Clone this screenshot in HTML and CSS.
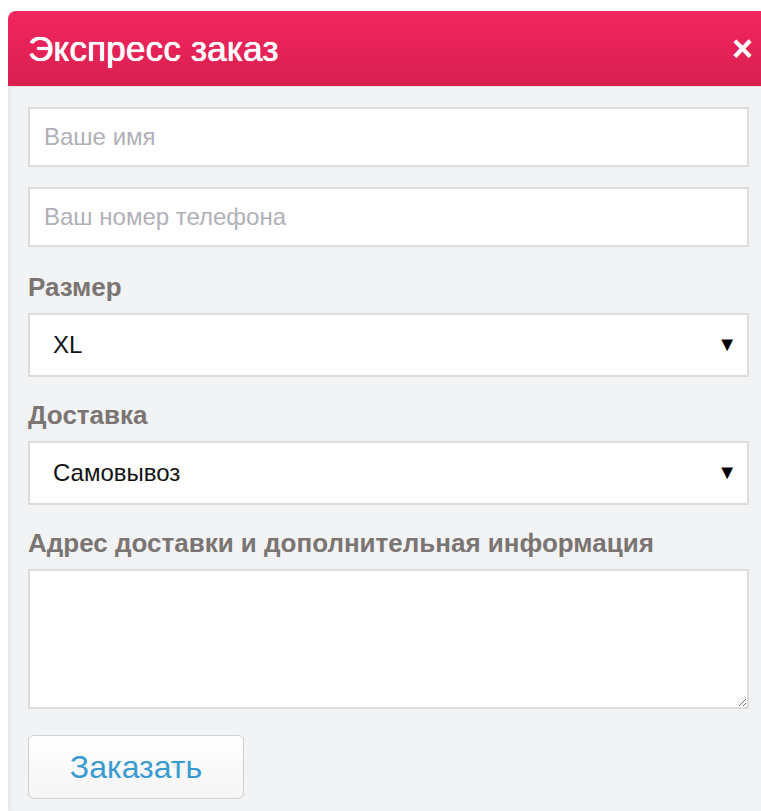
FILE: index.html
```html
<!DOCTYPE html>
<html lang="ru">
<head>
<meta charset="utf-8">
<title>Экспресс заказ</title>
<link rel="stylesheet" href="styles.css">
</head>
<body>
<div class="modal">
  <div class="modal-head">
    <h2 class="modal-title">Экспресс заказ</h2>
    <span class="modal-close">×</span>
  </div>
  <form class="modal-body">
    <input class="field" type="text" placeholder="Ваше имя">
    <input class="field" type="text" placeholder="Ваш номер телефона">
    <label class="label">Размер</label>
    <div class="select">
      <span class="select-value">XL</span>
      <span class="select-arrow">▼</span>
    </div>
    <label class="label">Доставка</label>
    <div class="select">
      <span class="select-value">Самовывоз</span>
      <span class="select-arrow">▼</span>
    </div>
    <label class="label">Адрес доставки и дополнительная информация</label>
    <textarea class="area"></textarea>
    <div class="actions">
      <button class="btn" type="button">Заказать</button>
    </div>
  </form>
</div>
</body>
</html>
```

FILE: styles.css
```css
html, body {
  margin: 0;
  padding: 0;
  background: #ffffff;
  font-family: "Liberation Sans", Arial, sans-serif;
}

body {
  padding: 11px 0 0 8px;
  overflow: hidden;
}

.modal {
  width: 780px;
  border-radius: 8px 8px 0 0;
  background: #f2f3f5;
  box-shadow: inset 6px 0 6px -4px rgba(0, 0, 0, 0.06);
  overflow: hidden;
}

.modal-head {
  height: 75px;
  background: linear-gradient(#f2265f, #d91f50);
  display: flex;
  align-items: center;
  padding: 0 20px 0 20px;
  border-bottom: 1px solid #e7e3e5;
}

.modal-title {
  margin: 0;
  color: #ffffff;
  font-size: 35px;
  font-weight: normal;
  letter-spacing: 0.2px;
  flex: 1;
  text-shadow: 0 0 1px #ffffff, 0.4px 0 0 #ffffff;
}

.modal-close {
  color: #ffffff;
  font-size: 36px;
  font-weight: bold;
  line-height: 1;
  margin-right: 15px;
}

.modal-body {
  padding: 20px 0 13px 20px;
  width: 721px;
  display: flex;
  flex-direction: column;
}

.field {
  box-sizing: border-box;
  height: 60px;
  margin: 0 0 20px 0;
  border: 2px solid #dcdcdc;
  background: #ffffff;
  padding: 0 14px;
  font-family: "Liberation Sans", Arial, sans-serif;
  font-size: 24px;
  outline: none;
}

.field::placeholder {
  color: #b0b0b8;
}

.label {
  font-size: 26px;
  font-weight: bold;
  color: #7a7572;
  margin: 5px 0 11px 0;
  line-height: 30px;
}

.select {
  box-sizing: border-box;
  height: 64px;
  border: 2px solid #dcdcdc;
  background: #ffffff;
  display: flex;
  align-items: center;
  padding: 0 10px 0 23px;
  margin-bottom: 18px;
}

.select-value {
  flex: 1;
  font-size: 24px;
  color: #111111;
}

.select-arrow {
  font-size: 20px;
  line-height: 1;
  margin-top: -3px;
  color: #000000;
}

.area {
  box-sizing: border-box;
  height: 140px;
  border: 2px solid #dcdcdc;
  background: #ffffff;
  resize: vertical;
  margin: 0;
  outline: none;
}

.actions {
  margin-top: 26px;
}

.btn {
  width: 216px;
  height: 64px;
  border: 1px solid #cfd0d3;
  border-radius: 6px;
  background: linear-gradient(#ffffff, #f4f4f5);
  color: #3b9bd1;
  font-family: "Liberation Sans", Arial, sans-serif;
  font-size: 32px;
  padding: 0;
}
```
